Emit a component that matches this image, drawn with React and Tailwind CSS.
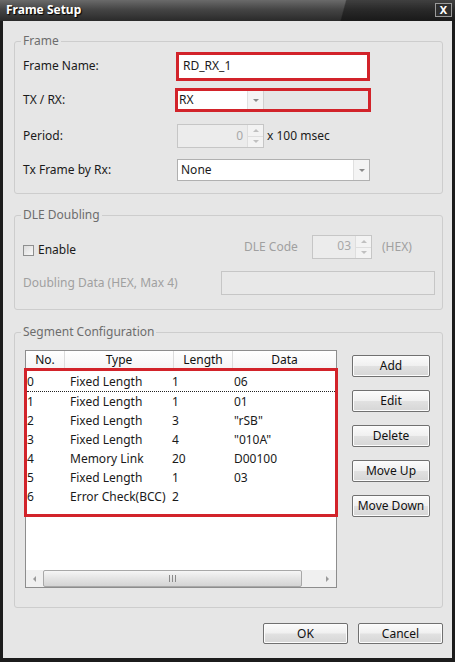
import React from "react";

function Tri({ dir = "down", color = "#7c7c7c" }) {
  const pts =
    dir === "down" ? "0,0 6,0 3,3" : dir === "up" ? "0,3 6,3 3,0" : dir === "left" ? "3,0 3,6 0,3" : "0,0 0,6 3,3";
  const w = dir === "down" || dir === "up" ? 6 : 3;
  const h = dir === "down" || dir === "up" ? 3 : 6;
  return (
    <svg width={w} height={h} viewBox={`0 0 ${w} ${h}`} className="block">
      <polygon points={pts} fill={color} />
    </svg>
  );
}

function ArrowBtn() {
  return (
    <div className="w-[16px] h-full flex items-center justify-center bg-[#f4f4f4] border-l border-[#e0e0e0]">
      <Tri dir="down" color="#8a8a8a" />
    </div>
  );
}

function Spin() {
  return (
    <div className="w-[16px] h-full flex flex-col">
      <div className="flex-1 flex items-center justify-center bg-[#f3f3f3] border-l border-b border-[#dedede]">
        <Tri dir="up" color="#c0c0c0" />
      </div>
      <div className="flex-1 flex items-center justify-center bg-[#f3f3f3] border-l border-[#dedede]">
        <Tri dir="down" color="#c0c0c0" />
      </div>
    </div>
  );
}

function Btn({ children, className = "" }) {
  return (
    <div
      className={
        "flex items-center justify-center border border-[#707070] rounded-[2px] bg-[linear-gradient(to_bottom,#fbfbfb_0%,#f0f0f0_48%,#e1e1e1_52%,#d6d6d6_100%)] shadow-[inset_0_0_0_1px_#fcfcfc] text-[#111] " +
        className
      }
    >
      {children}
    </div>
  );
}

const rows = [
  ["0", "Fixed Length", "1", "06"],
  ["1", "Fixed Length", "1", "01"],
  ["2", "Fixed Length", "3", '"rSB"'],
  ["3", "Fixed Length", "4", '"010A"'],
  ["4", "Memory Link", "20", "D00100"],
  ["5", "Fixed Length", "1", "03"],
  ["6", "Error Check(BCC)", "2", ""],
];

export default function App() {
  return (
    <div className="w-[455px] h-[662px] bg-[#1c1c1c] flex flex-col font-['Noto_Sans',sans-serif] text-[12px] leading-[16px] text-[#1a1a1a] overflow-hidden">
      {/* Title bar */}
      <div className="h-[21px] flex justify-between items-start bg-[linear-gradient(105deg,rgba(0,0,0,0)_0%,rgba(0,0,0,0)_75%,rgba(0,0,0,0.4)_75.3%),linear-gradient(to_bottom,#6a6a6a_0%,#454545_45%,#2a2a2a_100%)]">
        <span className="pl-[6px] pt-[2px] text-white font-bold text-[12px] leading-[16px] [text-shadow:1px_1px_1px_#000]">
          Frame Setup
        </span>
        <div className="mt-[3px] mr-[3px] w-[17px] h-[14px] border border-[#9a9a9a] bg-[#2e2e2e] flex items-center justify-center text-white font-bold text-[11px] leading-[12px]">
          X
        </div>
      </div>

      {/* Body */}
      <div className="flex-1 mx-[3px] mb-[4px] bg-[#e6e6e6] pl-[11px] pr-[9px] pt-[12px] flex flex-col">
        {/* Frame */}
        <fieldset className="border border-[#cdcdcd] rounded-[3px] pl-[8px] pr-[8px] pt-[3px] pb-[9px]">
          <legend className="-ml-[2px] px-[2px] text-[#6d6d6d]">Frame</legend>
          <div className="flex items-center h-[28px]">
            <span className="w-[153px]">Frame Name:</span>
            <div className="w-[194px] h-[29px] border-[3px] border-[#d2232a] bg-white flex items-center pl-[4px]">
              RD_RX_1
            </div>
          </div>
          <div className="flex items-center h-[28px] mt-[6px]">
            <span className="w-[152px]">TX / RX:</span>
            <div className="w-[196px] h-[24px] border-[3px] border-[#d2232a] flex items-stretch">
              <div className="w-[86px] bg-white border-r border-[#d0d0d0] flex items-center justify-between pl-[1px]">
                <span>RX</span>
                <ArrowBtn />
              </div>
            </div>
          </div>
          <div className="flex items-center h-[28px] mt-[8px]">
            <span className="w-[154px]">Period:</span>
            <div className="w-[87px] h-[24px] border border-[#c6c6c6] bg-[#ececec] flex">
              <span className="flex-1 text-right pr-[4px] text-[#a8a8a8] leading-[22px]">0</span>
              <Spin />
            </div>
            <span className="ml-[3px]">x 100 msec</span>
          </div>
          <div className="flex items-center h-[28px] mt-[6px]">
            <span className="w-[154px]">Tx Frame by Rx:</span>
            <div className="w-[193px] h-[22px] border border-[#b0b0b0] bg-white flex items-center justify-between pl-[3px]">
              <span>None</span>
              <ArrowBtn />
            </div>
          </div>
        </fieldset>

        {/* DLE Doubling */}
        <fieldset className="mt-[13px] border border-[#cdcdcd] rounded-[3px] pl-[8px] pr-[7px] pt-[12px] pb-[14px]">
          <legend className="-ml-[2px] px-[2px] text-[#6d6d6d]">DLE Doubling</legend>
          <div className="flex items-center h-[24px]">
            <div className="w-[221px] flex items-center mt-[6px]">
              <span className="w-[11px] h-[11px] border border-[#8e8f8f] bg-[linear-gradient(135deg,#dcdcdc,#f8f8f8)]" />
              <span className="ml-[4px]">Enable</span>
            </div>
            <span className="w-[68px] text-[#a0a0a0]">DLE Code</span>
            <div className="w-[60px] h-[24px] border border-[#c6c6c6] bg-[#ececec] flex">
              <span className="flex-1 text-right pr-[4px] text-[#a8a8a8] leading-[20px]">03</span>
              <Spin />
            </div>
            <span className="ml-[10px] text-[#a0a0a0]">(HEX)</span>
          </div>
          <div className="flex items-center h-[24px] mt-[12px]">
            <span className="w-[198px] text-[#a0a0a0]">Doubling Data (HEX, Max 4)</span>
            <div className="w-[214px] h-[24px] border border-[#c6c6c6] bg-[#e8e8e8]" />
          </div>
        </fieldset>

        {/* Segment Configuration */}
        <fieldset className="mt-[14px] border border-[#cdcdcd] rounded-[3px] pl-[8px] pr-[8px] pt-[10px] pb-[19px]">
          <legend className="-ml-[2px] px-[2px] text-[#6d6d6d]">Segment Configuration</legend>
          <div className="flex items-start ml-[2px]">
            <div className="w-[312px] h-[238px] border border-[#8d8d8d] bg-white flex flex-col">
              <div className="h-[18px] flex border-b border-[#e2e2e2] bg-[linear-gradient(to_bottom,#ffffff,#f5f5f5)] text-[#111]">
                <div className="w-[39px] text-center border-r border-[#dcdcdc] leading-[18px]">No.</div>
                <div className="w-[109px] text-center border-r border-[#dcdcdc] leading-[18px]">Type</div>
                <div className="w-[59px] text-center border-r border-[#dcdcdc] leading-[18px]">Length</div>
                <div className="flex-1 text-center leading-[18px]">Data</div>
              </div>
              <div className="-mt-[1px] -mx-[2px] border-[3px] border-[#d2232a] bg-white pt-[2px] pb-[8px]">
                {rows.map((r, i) => (
                  <div
                    key={i}
                    className={
                      "h-[19px] flex items-center " + (i === 0 ? "border-b border-dotted border-[#222]" : "")
                    }
                  >
                    <span className="w-[43px]">{r[0]}</span>
                    <span className="w-[102px] whitespace-nowrap">{r[1]}</span>
                    <span className="w-[62px]">{r[2]}</span>
                    <span className="flex-1">{r[3]}</span>
                  </div>
                ))}
              </div>
              <div className="mt-auto h-[17px] flex items-stretch bg-[#f0f0f0]">
                <div className="w-[17px] flex items-center justify-center">
                  <Tri dir="left" color="#9a9a9a" />
                </div>
                <div className="w-[259px] border border-[#a8a8a8] rounded-[2px] bg-[linear-gradient(to_bottom,#f6f6f6,#e4e4e4_50%,#d4d4d4)] flex items-center justify-center gap-[2px]">
                  <span className="w-px h-[7px] bg-[#8a8a8a]" />
                  <span className="w-px h-[7px] bg-[#8a8a8a]" />
                  <span className="w-px h-[7px] bg-[#8a8a8a]" />
                </div>
                <div className="flex-1" />
                <div className="w-[17px] flex items-center justify-center">
                  <Tri dir="right" color="#9a9a9a" />
                </div>
              </div>
            </div>
            <div className="ml-[15px] mt-[5px] flex flex-col gap-[13px]">
              <Btn className="w-[78px] h-[22px]">Add</Btn>
              <Btn className="w-[78px] h-[22px]">Edit</Btn>
              <Btn className="w-[78px] h-[22px]">Delete</Btn>
              <Btn className="w-[78px] h-[22px]">Move Up</Btn>
              <Btn className="w-[78px] h-[22px]">Move Down</Btn>
            </div>
          </div>
        </fieldset>

        <div className="mt-[15px] flex justify-end gap-[10px]">
          <Btn className="w-[85px] h-[21px]">OK</Btn>
          <Btn className="w-[85px] h-[21px]">Cancel</Btn>
        </div>
      </div>
    </div>
  );
}
